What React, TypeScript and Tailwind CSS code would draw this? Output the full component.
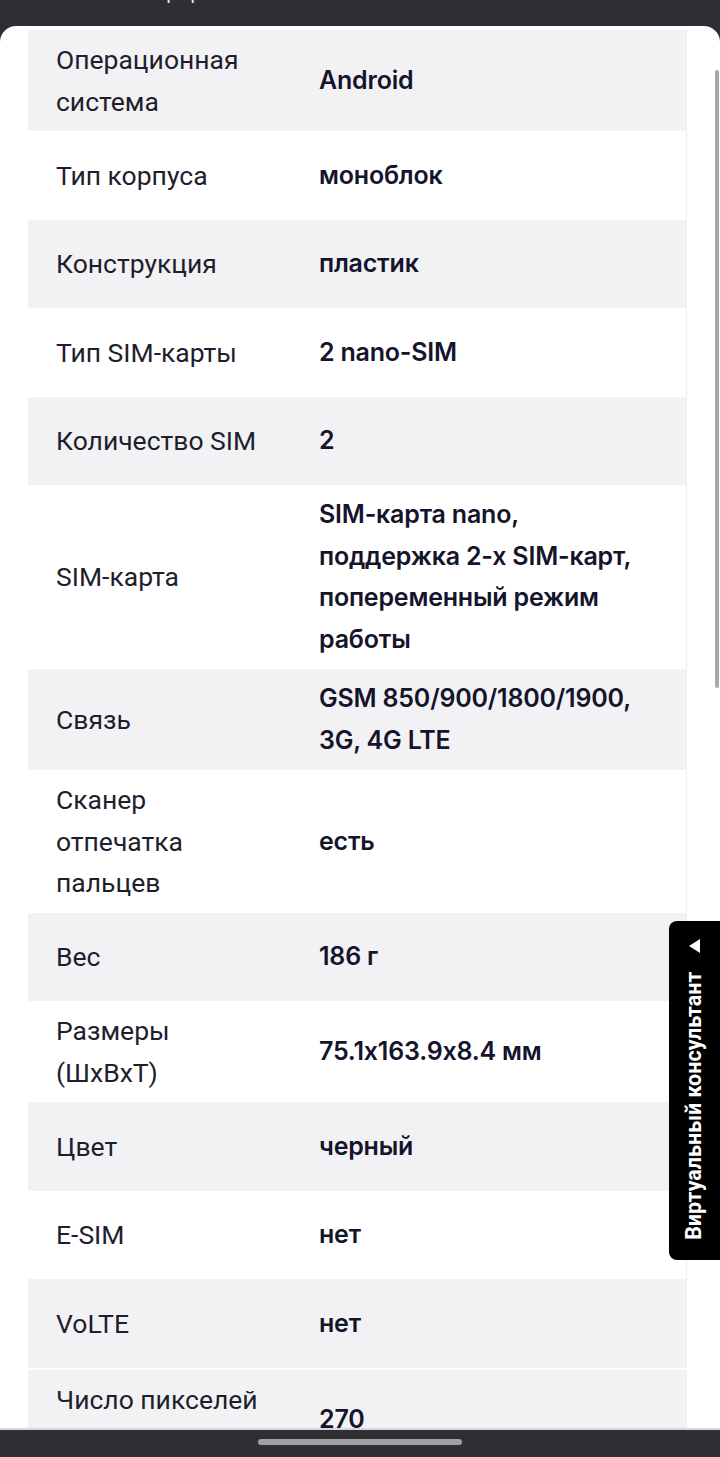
import React from "react";

type Row = { label: string; value: string; gray: boolean };

const rows: Row[] = [
  { label: "Операционная система", value: "Android", gray: true },
  { label: "Тип корпуса", value: "моноблок", gray: false },
  { label: "Конструкция", value: "пластик", gray: true },
  { label: "Тип SIM-карты", value: "2 nano-SIM", gray: false },
  { label: "Количество SIM", value: "2", gray: true },
  { label: "SIM-карта", value: "SIM-карта nano, поддержка 2-х SIM-карт, попеременный режим работы", gray: false },
  { label: "Связь", value: "GSM 850/900/1800/1900, 3G, 4G LTE", gray: true },
  { label: "Сканер отпечатка пальцев", value: "есть", gray: false },
  { label: "Вес", value: "186 г", gray: true },
  { label: "Размеры (ШxВxТ)", value: "75.1x163.9x8.4 мм", gray: false },
  { label: "Цвет", value: "черный", gray: true },
  { label: "E-SIM", value: "нет", gray: false },
  { label: "VoLTE", value: "нет", gray: true },
];

function SpecRow({ r }: { r: Row }) {
  return (
    <div
      className={`grid grid-cols-[291px_1fr] items-center min-h-[88.5px] py-[9px] ${
        r.gray ? "bg-[#f2f2f5]" : "bg-white"
      }`}
    >
      <div className="pl-[28px]">
        <div
          className="max-w-[216px] text-[26.5px] leading-[41.5px] text-[#1e1e2c]"
          style={{ fontFamily: "Roboto, sans-serif" }}
        >
          {r.label}
        </div>
      </div>
      <div
        className="pr-[28px] text-[25px] leading-[41.5px] font-semibold text-[#14142b] tracking-[-0.2px]"
        style={{ fontFamily: "Inter, sans-serif" }}
      >
        {r.value}
      </div>
    </div>
  );
}

export default function App() {
  return (
    <div className="w-[720px] h-[1457px] overflow-hidden flex flex-col bg-[#2e2e33]">
      <div className="h-[26px] shrink-0 overflow-hidden relative">
        <div
          className="absolute left-[130px] top-[-19px] text-[20px] leading-[22px] text-[#e8e8ea]"
          style={{ fontFamily: "Roboto, sans-serif" }}
        >
          смартфоны.ru
        </div>
      </div>
      <div className="flex-1 relative overflow-hidden bg-white rounded-t-[16px]">
        <div className="pt-[4px] pl-[28px] pr-[33px]">
          <div className="border-r border-[#eeeef2]">
            {rows.map((r, i) => (
              <SpecRow key={i} r={r} />
            ))}
          </div>
          <div className="h-[2px]" />
          <div className="border-r border-[#eeeef2]">
            <SpecRow r={{ label: "Число пикселей на\u00a0дюйм", value: "270", gray: true }} />
          </div>
        </div>
        {/* scrollbar */}
        <div className="absolute right-[1px] top-[44px] w-[4px] h-[618px] rounded-full bg-[#a8a8ae]" />
        {/* consultant tab */}
        <div className="absolute right-0 top-[895px] w-[51px] h-[339px] bg-black rounded-l-[8px] flex flex-col items-center pt-[18px]">
          <svg width="12" height="14" viewBox="0 0 12 14">
            <path d="M11 0 L11 14 L0 7 Z" fill="white" />
          </svg>
          <div className="flex-1 flex items-center justify-center pb-[2px]">
            <div
              className="-rotate-90 whitespace-nowrap text-white font-bold text-[21.5px] leading-none"
              style={{ fontFamily: "Roboto, sans-serif" }}
            >
              Виртуальный консультант
            </div>
          </div>
        </div>
      </div>
      <div className="h-[29px] shrink-0 border-t-[2px] border-[#d8d8dc] bg-[#2e2e33] flex justify-center pt-[9px]">
        <div className="w-[204px] h-[6px] rounded-full bg-[#a0a0a4]" />
      </div>
    </div>
  );
}
